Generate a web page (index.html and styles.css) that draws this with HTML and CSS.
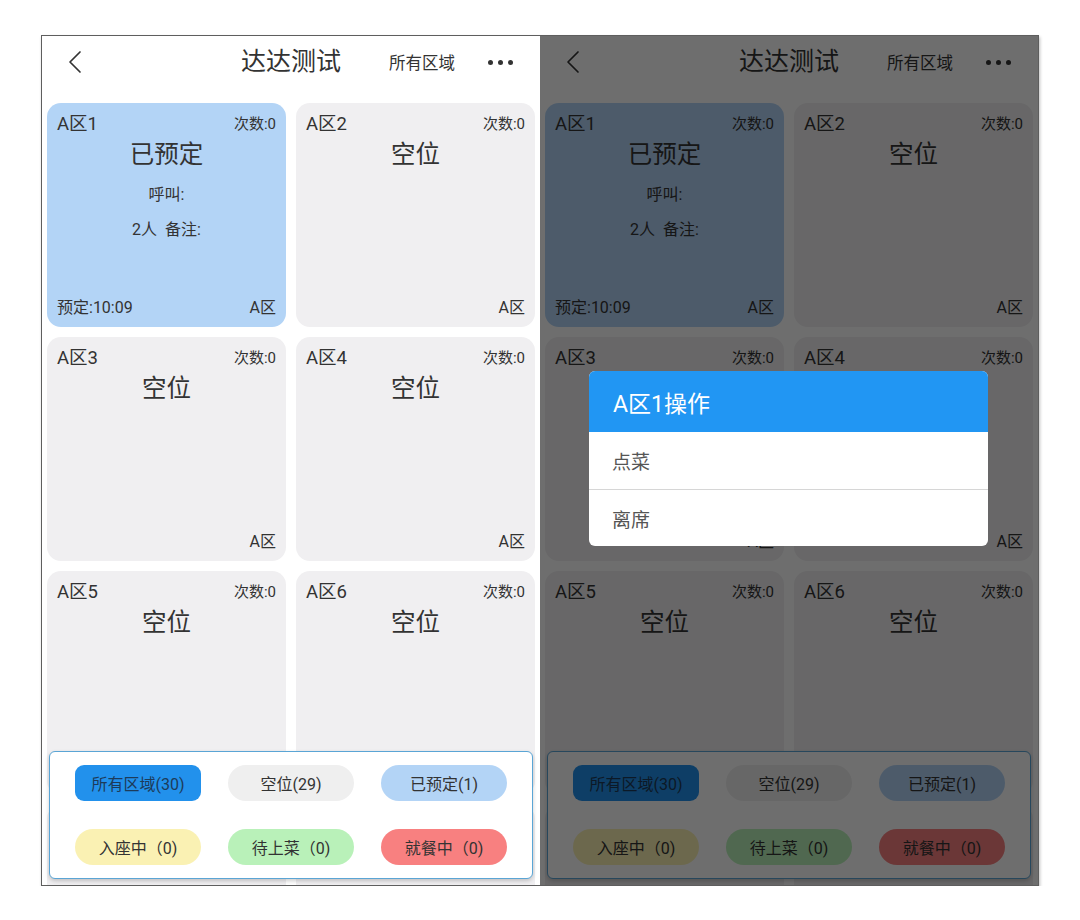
FILE: index.html
```html
<!DOCTYPE html>
<html lang="zh">
<head>
<meta charset="utf-8">
<title>达达测试</title>
<link rel="stylesheet" href="styles.css">
</head>
<body>
<div class="frame">
  <section class="phone">
    <header class="topbar">
      <div class="topbar__left">
        <svg class="back" width="14" height="24" viewBox="0 0 14 24"><polyline points="12,2 2,12 12,22" fill="none" stroke="#333" stroke-width="1.7" stroke-linecap="round" stroke-linejoin="round"/></svg>
      </div>
      <h1 class="topbar__title">达达测试</h1>
      <div class="topbar__right">
        <span class="topbar__area">所有区域</span>
        <span class="dots"><i></i><i></i><i></i></span>
      </div>
    </header>
    <div class="grid">
      <div class="card card--booked">
        <div class="card__top"><span class="card__name">A区1</span><span class="card__count">次数:0</span></div>
        <div class="card__status">已预定</div>
        <div class="card__line">呼叫:</div>
        <div class="card__line">2人&nbsp;&nbsp;备注:</div>
        <div class="card__bottom"><span>预定:10:09</span><span>A区</span></div>
      </div>
      <div class="card">
        <div class="card__top"><span class="card__name">A区2</span><span class="card__count">次数:0</span></div>
        <div class="card__status">空位</div>
        <div class="card__bottom"><span></span><span>A区</span></div>
      </div>
      <div class="card">
        <div class="card__top"><span class="card__name">A区3</span><span class="card__count">次数:0</span></div>
        <div class="card__status">空位</div>
        <div class="card__bottom"><span></span><span>A区</span></div>
      </div>
      <div class="card">
        <div class="card__top"><span class="card__name">A区4</span><span class="card__count">次数:0</span></div>
        <div class="card__status">空位</div>
        <div class="card__bottom"><span></span><span>A区</span></div>
      </div>
      <div class="card">
        <div class="card__top"><span class="card__name">A区5</span><span class="card__count">次数:0</span></div>
        <div class="card__status">空位</div>
      </div>
      <div class="card">
        <div class="card__top"><span class="card__name">A区6</span><span class="card__count">次数:0</span></div>
        <div class="card__status">空位</div>
      </div>
      <div class="card"></div>
      <div class="card"></div>
    </div>
    <div class="panel">
      <span class="pill pill--all">所有区域(30)</span>
      <span class="pill pill--empty">空位(29)</span>
      <span class="pill pill--booked">已预定(1)</span>
      <span class="pill pill--seat">入座中（0)</span>
      <span class="pill pill--wait">待上菜（0)</span>
      <span class="pill pill--eat">就餐中（0)</span>
    </div>
  </section>

  <section class="phone">
    <header class="topbar">
      <div class="topbar__left">
        <svg class="back" width="14" height="24" viewBox="0 0 14 24"><polyline points="12,2 2,12 12,22" fill="none" stroke="#333" stroke-width="1.7" stroke-linecap="round" stroke-linejoin="round"/></svg>
      </div>
      <h1 class="topbar__title">达达测试</h1>
      <div class="topbar__right">
        <span class="topbar__area">所有区域</span>
        <span class="dots"><i></i><i></i><i></i></span>
      </div>
    </header>
    <div class="grid">
      <div class="card card--booked">
        <div class="card__top"><span class="card__name">A区1</span><span class="card__count">次数:0</span></div>
        <div class="card__status">已预定</div>
        <div class="card__line">呼叫:</div>
        <div class="card__line">2人&nbsp;&nbsp;备注:</div>
        <div class="card__bottom"><span>预定:10:09</span><span>A区</span></div>
      </div>
      <div class="card">
        <div class="card__top"><span class="card__name">A区2</span><span class="card__count">次数:0</span></div>
        <div class="card__status">空位</div>
        <div class="card__bottom"><span></span><span>A区</span></div>
      </div>
      <div class="card">
        <div class="card__top"><span class="card__name">A区3</span><span class="card__count">次数:0</span></div>
        <div class="card__bottom"><span></span><span>A区</span></div>
      </div>
      <div class="card">
        <div class="card__top"><span class="card__name">A区4</span><span class="card__count">次数:0</span></div>
        <div class="card__bottom"><span></span><span>A区</span></div>
      </div>
      <div class="card">
        <div class="card__top"><span class="card__name">A区5</span><span class="card__count">次数:0</span></div>
        <div class="card__status">空位</div>
      </div>
      <div class="card">
        <div class="card__top"><span class="card__name">A区6</span><span class="card__count">次数:0</span></div>
        <div class="card__status">空位</div>
      </div>
      <div class="card"></div>
      <div class="card"></div>
    </div>
    <div class="panel">
      <span class="pill pill--all">所有区域(30)</span>
      <span class="pill pill--empty">空位(29)</span>
      <span class="pill pill--booked">已预定(1)</span>
      <span class="pill pill--seat">入座中（0)</span>
      <span class="pill pill--wait">待上菜（0)</span>
      <span class="pill pill--eat">就餐中（0)</span>
    </div>
    <div class="scrim"></div>
    <div class="dialog">
      <div class="dialog__title">A区1操作</div>
      <div class="dialog__item">点菜</div>
      <div class="dialog__item">离席</div>
    </div>
  </section>
</div>
</body>
</html>
```

FILE: styles.css
```css
* { box-sizing: border-box; }

html, body {
  margin: 0;
  padding: 0;
  background: #ffffff;
}

body {
  font-family: Roboto, "Noto Sans CJK SC", "Noto Sans", sans-serif;
  color: #333333;
}

.frame {
  display: flex;
  margin: 35px 0 0 41px;
  width: max-content;
  border: 1px solid #5e5e5e;
  box-shadow: 1px 2px 3px rgba(0, 0, 0, 0.25);
}

.phone {
  position: relative;
  width: 498px;
  height: 849px;
  overflow: hidden;
  background: #ffffff;
}

/* header */
.topbar {
  display: grid;
  grid-template-columns: 1fr auto 1fr;
  align-items: center;
  height: 52px;
}

.topbar__left {
  display: flex;
  align-items: center;
  padding-left: 26px;
}

.back { display: block; }

.topbar__title {
  margin: 0;
  font-size: 25px;
  font-weight: 400;
  color: #333333;
  line-height: 30px;
}

.topbar__right {
  display: flex;
  justify-content: flex-end;
  align-items: center;
  gap: 33px;
  padding-right: 27px;
}

.topbar__area {
  font-size: 16.5px;
  color: #333333;
}

.dots {
  display: flex;
  gap: 5px;
}

.dots i {
  display: block;
  width: 5px;
  height: 5px;
  border-radius: 50%;
  background: #333333;
}

/* cards */
.grid {
  display: grid;
  grid-template-columns: 239px 239px;
  grid-auto-rows: 224px;
  column-gap: 10px;
  row-gap: 10px;
  padding: 15px 5px 0;
}

.card {
  display: flex;
  flex-direction: column;
  padding: 10px 10px 8px;
  border-radius: 14px;
  background: #f0eff1;
  color: #333333;
}

.card--booked { background: #b3d4f6; }

.card__top {
  display: flex;
  justify-content: space-between;
  align-items: center;
  height: 22px;
}

.card__name {
  font-size: 18.5px;
  line-height: 22px;
}

.card__count {
  font-size: 15px;
  line-height: 22px;
}

.card__status {
  margin-top: 3px;
  text-align: center;
  font-size: 24.5px;
  line-height: 34px;
}

.card__line {
  margin-top: 11px;
  text-align: center;
  font-size: 16px;
  line-height: 24px;
}

.card__bottom {
  display: flex;
  justify-content: space-between;
  margin-top: auto;
  font-size: 16px;
  line-height: 22px;
}

/* bottom filter panel */
.panel {
  position: absolute;
  left: 7px;
  right: 7px;
  bottom: 6px;
  height: 128px;
  display: grid;
  grid-template-columns: repeat(3, 126px);
  grid-auto-rows: 36px;
  column-gap: 27px;
  row-gap: 28px;
  justify-content: center;
  padding-top: 13px;
  background: #ffffff;
  border: 1.5px solid #5aa5d5;
  border-radius: 6px;
  box-shadow: 0 2px 4px rgba(0, 0, 0, 0.2);
}

.pill {
  display: flex;
  align-items: center;
  justify-content: center;
  border-radius: 18px;
  font-size: 16px;
  color: #333333;
}

.pill--all { background: #2291ec; border-radius: 9px; color: #1d3b5a; }
.pill--empty { background: #efefef; }
.pill--booked { background: #b3d4f6; }
.pill--seat { background: #faf1b3; }
.pill--wait { background: #b9f1b9; }
.pill--eat { background: #f88080; }

/* dimmed state */
.scrim {
  position: absolute;
  inset: 0;
  background: rgba(0, 0, 0, 0.57);
}

.dialog {
  position: absolute;
  left: 49px;
  top: 335px;
  width: 399px;
  border-radius: 6px;
  overflow: hidden;
  background: #ffffff;
}

.dialog__title {
  display: flex;
  align-items: center;
  height: 61px;
  padding-left: 24px;
  background: #2196f3;
  color: #ffffff;
  font-size: 23px;
}

.dialog__item {
  display: flex;
  align-items: center;
  height: 57px;
  padding-left: 23px;
  font-size: 19px;
  color: #555555;
}

.dialog__item + .dialog__item {
  border-top: 1px solid #d6d6d6;
}
```
